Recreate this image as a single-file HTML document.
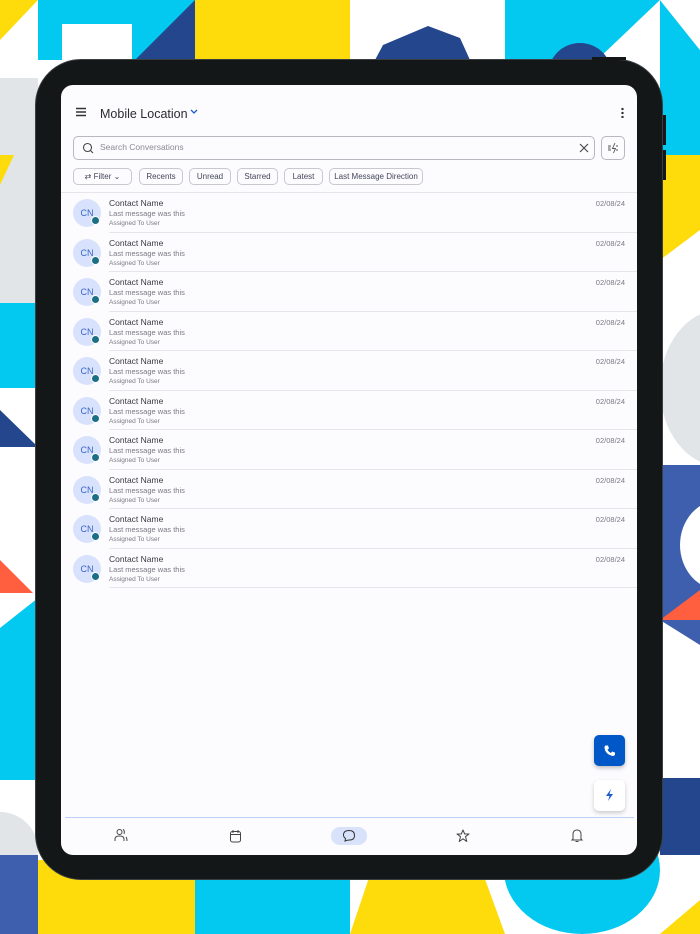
<!DOCTYPE html>
<html><head><meta charset="utf-8">
<style>
*{box-sizing:border-box;margin:0;padding:0}
body{width:700px;height:934px;position:relative;overflow:hidden;background:#fff;font-family:"Liberation Sans",sans-serif}
.a{position:absolute}
.dev{left:35px;top:59px;width:628px;height:821px;background:#131718;border-radius:46px;border:1px solid #3a3f42}
.scr{left:61px;top:85px;width:576px;height:770px;background:#fcfbfe;border-radius:12px;overflow:hidden}
.chip{position:absolute;top:83px;height:17px;border:1px solid #c9c8cf;border-radius:5px;font-size:8px;color:#44475a;line-height:15px;text-align:center}
.row{position:absolute;left:0;width:576px;height:39.5px}
.av{position:absolute;left:12px;top:6px;width:28px;height:28px;border-radius:50%;background:#d9e2fd;color:#3a66c4;font-size:9px;text-align:center;line-height:28px}
.dot{position:absolute;left:30px;top:23px;width:9px;height:9px;border-radius:50%;background:#1a6e85;border:1px solid #fff}
.nm{position:absolute;left:48px;top:5px;font-size:8.5px;color:#3a3a3f}
.ms{position:absolute;left:48px;top:16px;font-size:7.5px;color:#7a7a82}
.as{position:absolute;left:48px;top:27px;font-size:6.5px;color:#7a7a82}
.dt{position:absolute;right:12px;top:6px;font-size:7.5px;color:#7a7a82}
.ln{position:absolute;left:48px;right:0;bottom:0;height:1px;background:#e6e5ea}
</style></head><body>
<div class="a" style="left:38px;top:0;width:157px;height:60px;background:#03c9f0"></div>
<div class="a" style="left:62px;top:24px;width:70px;height:40px;background:#fff"></div>
<svg class="a" style="left:0;top:0" width="700" height="934">
<polygon points="0,0 38,0 0,40" fill="#fedb0a"/>
<polygon points="135,60 195,0 195,60" fill="#23468c"/>
<rect x="195" y="0" width="155" height="60" fill="#fedb0a"/>
<polygon points="383,45 428,26 460,38 470,60 375,60" fill="#23468c"/>
<rect x="505" y="0" width="155" height="60" fill="#03c9f0"/>
<polygon points="597,60 660,0 660,60" fill="#fff"/>
<circle cx="580" cy="75" r="32" fill="#23468c"/>
<polygon points="660,0 700,50 700,155 660,155" fill="#03c9f0"/>
<polygon points="660,0 700,0 700,50" fill="#fff"/>
<rect x="0" y="78" width="38" height="225" fill="#e1e5e8"/>
<polygon points="0,155 14,155 0,185" fill="#fedb0a"/>
<rect x="0" y="303" width="38" height="85" fill="#03c9f0"/>
<polygon points="0,410 38,447 0,447" fill="#23468c"/>
<polygon points="0,560 33,593 0,593" fill="#ff5f3f"/>
<polygon points="38,598 0,628 0,780 38,780" fill="#03c9f0"/>
<circle cx="0" cy="850" r="38" fill="#e1e5e8"/>
<rect x="0" y="855" width="38" height="79" fill="#3d5fae"/>
<rect x="38" y="860" width="157" height="74" fill="#fedb0a"/>
<rect x="195" y="860" width="155" height="74" fill="#03c9f0"/>
<polygon points="375,860 478,860 505,934 350,934" fill="#fedb0a"/>
<ellipse cx="582" cy="870" rx="78" ry="64" fill="#03c9f0"/>
<polygon points="660,934 700,900 700,934" fill="#fedb0a"/>
<polygon points="660,155 700,155 700,230 660,260" fill="#fedb0a"/>
<ellipse cx="720" cy="388" rx="60" ry="78" fill="#e1e5e8"/>
<rect x="660" y="465" width="40" height="155" fill="#3d5fae"/>
<ellipse cx="720" cy="545" rx="40" ry="45" fill="#fff"/>
<polygon points="660,620 700,590 700,620" fill="#ff5f3f"/>
<polygon points="660,620 700,620 700,645" fill="#3d5fae"/>
<rect x="660" y="778" width="40" height="77" fill="#23468c"/>
</svg>
<div class="a dev"></div>
<div class="a" style="left:663px;top:115px;width:3px;height:30px;background:#131718"></div>
<div class="a" style="left:663px;top:150px;width:3px;height:30px;background:#131718"></div>
<div class="a" style="left:592px;top:57px;width:34px;height:3px;background:#131718"></div>
<div class="a scr">
  <svg class="a" style="left:14px;top:22px" width="12" height="10"><path d="M1 1.5H11M1 5H11M1 8.5H11" stroke="#333" stroke-width="1.4"/></svg>
  <div class="a" style="left:39px;top:22px;font-size:12.5px;color:#2c2c30">Mobile Location</div>
  <svg class="a" style="left:129px;top:24px" width="8" height="6"><path d="M1 1L4 4L7 1" stroke="#1b5ccf" stroke-width="1.3" fill="none"/></svg>
  <div class="a" style="left:560px;top:22px;width:3px;height:11px;background:radial-gradient(circle,#333 1.2px,transparent 1.3px) 0 0/3px 4px"></div>
  <div class="a" style="left:12px;top:51px;width:522px;height:24px;border:1px solid #b9b8c0;border-radius:5px"></div>
  <svg class="a" style="left:21px;top:57px" width="12" height="12"><circle cx="5.5" cy="5.5" r="4" stroke="#444" stroke-width="1.1" fill="none"/><path d="M8.5 8.5L11 11" stroke="#444" stroke-width="1.1"/></svg>
  <div class="a" style="left:39px;top:57px;font-size:8.5px;color:#8a8a92">Search Conversations</div>
  <svg class="a" style="left:518px;top:58px" width="10" height="10"><path d="M1 1L9 9M9 1L1 9" stroke="#444" stroke-width="1.1"/></svg>
  <div class="a" style="left:540px;top:51px;width:24px;height:24px;border:1px solid #b9b8c0;border-radius:5px"></div>
  <svg class="a" style="left:546px;top:57px" width="12" height="12"><path d="M1 4H4M1 6H3.5M1 8H4M8 1L5.5 6.5H8.5L6.5 11M9 4H11M9 8H11" stroke="#555" stroke-width="0.9" fill="none"/></svg>
  <div class="chip" style="left:12px;width:59px"><span style="font-size:8px">⇄</span> Filter ⌄</div>
  <div class="chip" style="left:78px;width:44px">Recents</div>
  <div class="chip" style="left:128px;width:42px">Unread</div>
  <div class="chip" style="left:176px;width:41px">Starred</div>
  <div class="chip" style="left:223px;width:39px">Latest</div>
  <div class="chip" style="left:268px;width:94px">Last Message Direction</div>
  <div class="a" style="left:0;top:107px;width:576px;height:1px;background:#e6e5ea"></div>
  <div class="a" style="left:0;top:108px;width:576px">
    <div class="row" style="top:0"><div class="av">CN</div><div class="dot"></div><div class="nm">Contact Name</div><div class="ms">Last message was this</div><div class="as">Assigned To User</div><div class="dt">02/08/24</div><div class="ln"></div></div>
    <div class="row" style="top:39.5px"><div class="av">CN</div><div class="dot"></div><div class="nm">Contact Name</div><div class="ms">Last message was this</div><div class="as">Assigned To User</div><div class="dt">02/08/24</div><div class="ln"></div></div>
    <div class="row" style="top:79px"><div class="av">CN</div><div class="dot"></div><div class="nm">Contact Name</div><div class="ms">Last message was this</div><div class="as">Assigned To User</div><div class="dt">02/08/24</div><div class="ln"></div></div>
    <div class="row" style="top:118.5px"><div class="av">CN</div><div class="dot"></div><div class="nm">Contact Name</div><div class="ms">Last message was this</div><div class="as">Assigned To User</div><div class="dt">02/08/24</div><div class="ln"></div></div>
    <div class="row" style="top:158px"><div class="av">CN</div><div class="dot"></div><div class="nm">Contact Name</div><div class="ms">Last message was this</div><div class="as">Assigned To User</div><div class="dt">02/08/24</div><div class="ln"></div></div>
    <div class="row" style="top:197.5px"><div class="av">CN</div><div class="dot"></div><div class="nm">Contact Name</div><div class="ms">Last message was this</div><div class="as">Assigned To User</div><div class="dt">02/08/24</div><div class="ln"></div></div>
    <div class="row" style="top:237px"><div class="av">CN</div><div class="dot"></div><div class="nm">Contact Name</div><div class="ms">Last message was this</div><div class="as">Assigned To User</div><div class="dt">02/08/24</div><div class="ln"></div></div>
    <div class="row" style="top:276.5px"><div class="av">CN</div><div class="dot"></div><div class="nm">Contact Name</div><div class="ms">Last message was this</div><div class="as">Assigned To User</div><div class="dt">02/08/24</div><div class="ln"></div></div>
    <div class="row" style="top:316px"><div class="av">CN</div><div class="dot"></div><div class="nm">Contact Name</div><div class="ms">Last message was this</div><div class="as">Assigned To User</div><div class="dt">02/08/24</div><div class="ln"></div></div>
    <div class="row" style="top:355.5px"><div class="av">CN</div><div class="dot"></div><div class="nm">Contact Name</div><div class="ms">Last message was this</div><div class="as">Assigned To User</div><div class="dt">02/08/24</div><div class="ln"></div></div>
  </div>
  <div class="a" style="left:533px;top:650px;width:31px;height:31px;background:#0057c8;border-radius:5px;box-shadow:0 2px 4px rgba(0,0,0,.25)"></div>
  <svg class="a" style="left:542px;top:659px" width="13" height="13"><path d="M2.5 1.5L5 1.5L6 4.5L4.5 5.5Q5.5 8 8 9L9 7.5L12 8.5V11Q11 12 9.5 12Q2 10 1.5 3.5Q1.5 2 2.5 1.5Z" fill="#fff"/></svg>
  <div class="a" style="left:533px;top:695px;width:31px;height:31px;background:#fff;border-radius:5px;box-shadow:0 2px 4px rgba(0,0,0,.2)"></div>
  <svg class="a" style="left:542px;top:703px" width="13" height="14"><path d="M8 1L3 8H6.5L5 13L10 6H6.5Z" fill="#1b5ccf"/></svg>
  <div class="a" style="left:4px;top:732px;width:569px;height:1px;background:#bcd0f5"></div>
  <svg class="a" style="left:53px;top:743px" width="14" height="14"><circle cx="5.5" cy="4" r="2.5" stroke="#444" fill="none"/><path d="M1 13V11Q1 8 5.5 8Q10 8 10 11V13M9 1.5Q11 2.5 10 6M12 9Q13 10 13 13" stroke="#444" fill="none"/></svg>
  <svg class="a" style="left:168px;top:744px" width="13" height="14"><rect x="1.5" y="2.5" width="10" height="10.5" rx="2" stroke="#444" fill="none"/><path d="M1.5 5.5H11.5M4 1V4M9 1V4" stroke="#444"/></svg>
  <div class="a" style="left:270px;top:742px;width:36px;height:18px;background:#d8e2fb;border-radius:9px"></div>
  <svg class="a" style="left:281px;top:744px" width="14" height="14"><path d="M3 12L3.5 9.5Q1.5 8 1.5 6Q1.5 1.5 7 1.5Q12.5 1.5 12.5 6.5Q12.5 11 7.5 11Q5.5 11 3 12Z" stroke="#333" fill="none"/></svg>
  <svg class="a" style="left:395px;top:744px" width="14" height="14"><path d="M7 1L8.7 5H13L9.5 7.7L10.8 12.5L7 9.8L3.2 12.5L4.5 7.7L1 5H5.3Z" stroke="#444" fill="none" stroke-linejoin="round"/></svg>
  <svg class="a" style="left:509px;top:743px" width="14" height="15"><path d="M3 11V6.5Q3 2 7 2Q11 2 11 6.5V11L12 12H2Z" stroke="#444" fill="none"/><path d="M5.5 13.5H8.5" stroke="#444"/></svg>
</div>
</body></html>
